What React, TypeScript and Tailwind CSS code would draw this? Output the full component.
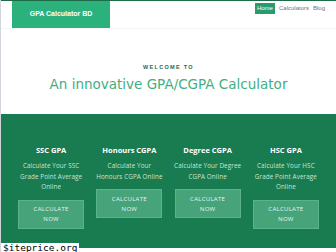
import React from 'react';

const cards = [
  { title: 'SSC GPA', desc: ['Calculate Your SSC', 'Grade Point Average', 'Online'] },
  { title: 'Honours CGPA', desc: ['Calculate Your', 'Honours CGPA Online'] },
  { title: 'Degree CGPA', desc: ['Calculate Your Degree', 'CGPA Online'] },
  { title: 'HSC GPA', desc: ['Calculate Your HSC', 'Grade Point Average', 'Online'] },
];

export default function App() {
  return (
    <div className="relative w-[336px] h-[252px] overflow-hidden bg-white border-l border-gray-300" style={{ fontFamily: '"Liberation Sans", Arial, sans-serif' }}>
      {/* header */}
      <div className="border-t border-[#1d6b47] border-b border-b-gray-100">
        <div className="mx-[11px] flex h-[27px] items-start justify-between">
          <div className="flex h-[27px] w-[98px] items-center justify-center bg-[#2bb27c] text-[7px] font-bold text-white">
            GPA Calculator BD
          </div>
          <nav className="mt-[2px] flex items-center gap-[4px] text-[6px] text-gray-500">
            <span className="bg-[#2a9b6c] px-[2px] py-[1px] text-white">Home</span>
            <span>Calculators</span>
            <span>Blog</span>
          </nav>
        </div>
      </div>

      {/* intro */}
      <div className="flex flex-col items-center pt-[34px] pb-[22px]">
        <div className="text-[5.5px] font-bold tracking-[1.3px] text-[#1f6b4a]">WELCOME TO</div>
        <h1 className="mt-[5px] text-[13.5px] leading-[16px] text-[#3fae80]" style={{ fontFamily: '"DejaVu Sans", Verdana, sans-serif' }}>
          An innovative GPA/CGPA Calculator
        </h1>
      </div>

      {/* calculators */}
      <div className="h-[134px] bg-[#197b50]">
        <div className="mx-[11px] grid grid-cols-4 pt-[32px]" style={{ fontFamily: '"Open Sans", Lato, sans-serif' }}>
          {cards.map((c) => (
            <div key={c.title} className="flex flex-col items-center px-[2px] text-center">
              <div className="text-[7.5px] font-bold leading-[9px] text-white">{c.title}</div>
              <div className="mt-[6px] text-[6.3px] leading-[10.5px] tracking-[0.1px] text-[#c6e6d5] whitespace-nowrap">
                {c.desc.map((d) => (
                  <div key={d}>{d}</div>
                ))}
              </div>
              <div className="mt-[7px] flex h-[29px] w-[66px] flex-col items-center justify-center border border-[#5cb38b] bg-[#47a37a] text-[6px] leading-[10px] tracking-[0.3px] text-[#e4f3ea]">
                <span>CALCULATE</span>
                <span>NOW</span>
              </div>
            </div>
          ))}
        </div>
      </div>

      {/* watermark */}
      <div className="absolute left-0 bottom-0 bg-white px-[2px] text-[9.5px] leading-[9px] text-black" style={{ fontFamily: '"DejaVu Sans Mono", monospace' }}>
        $iteprice.org
      </div>
    </div>
  );
}
